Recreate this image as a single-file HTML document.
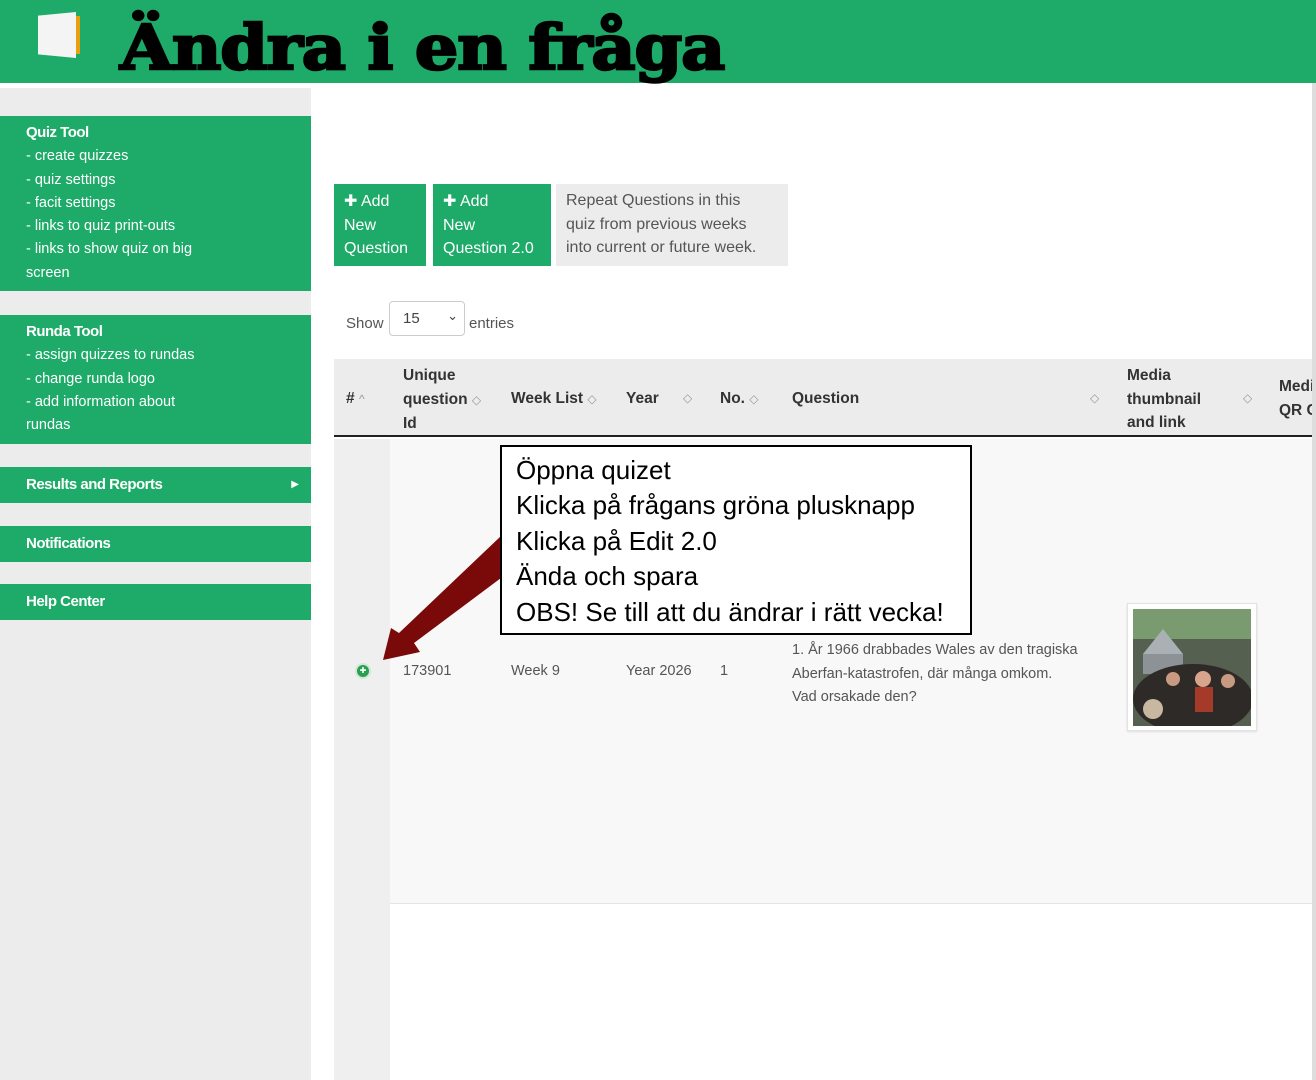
<!DOCTYPE html>
<html><head><meta charset="utf-8"><style>
*{margin:0;padding:0;box-sizing:border-box}
body{width:1316px;height:1080px;position:relative;overflow:hidden;background:#fff;font-family:"Liberation Sans",sans-serif;color:#444}
.a{position:absolute}
.hdr{left:0;top:0;width:1316px;height:83px;background:#1eab69}
.title{left:120px;top:11px;font-family:"DejaVu Serif","Liberation Serif",serif;font-weight:900;font-size:62px;color:#000;letter-spacing:-1px;transform:scaleX(1.1);transform-origin:left;-webkit-text-stroke:2.5px #000}
.side{left:0;top:88px;width:311px;height:992px;background:#ececec}
.blk{position:absolute;left:0;width:311px;background:#1eab69;color:#fff;font-size:14.5px;padding-left:26px;line-height:23.3px}
.blk b{font-size:15px;letter-spacing:-.5px}
.btn{background:#1eab69;color:#fff;font-size:16px;line-height:23.5px;padding:6px 10px}
.gt{color:#555;font-size:16px;line-height:23.5px}
.th{font-weight:bold;font-size:15.5px;color:#333;line-height:23.5px}
.td{font-size:14.5px;color:#555}
.s{color:#999;font-size:12px;font-weight:normal}
.note{left:500px;top:445px;width:472px;height:190px;border:2px solid #000;background:#fff;font-size:26px;color:#000;line-height:35.4px;padding:6px 14px;white-space:nowrap}
</style></head><body>
<div class="a hdr"></div>
<div class="a" style="left:38px;top:12px;width:38px;height:46px;background:#f4f4f4;clip-path:polygon(0 8%,100% 0,100% 100%,0 92%)"></div>
<div class="a" style="left:76px;top:16px;width:4px;height:38px;background:#e8a010"></div>
<div class="a title">Ändra i en fråga</div>
<div class="a side"></div>
<div class="blk" style="top:116px;height:175px;padding-top:5px"><b>Quiz Tool</b><br>- create quizzes<br>- quiz settings<br>- facit settings<br>- links to quiz print-outs<br>- links to show quiz on big<br>screen</div>
<div class="blk" style="top:315px;height:129px;padding-top:5px"><b>Runda Tool</b><br>- assign quizzes to rundas<br>- change runda logo<br>- add information about<br>rundas</div>
<div class="blk" style="top:467px;height:36px;line-height:36px"><b>Results and Reports</b><span style="position:absolute;right:12px;font-size:10px">▶</span></div>
<div class="blk" style="top:526px;height:36px;line-height:36px"><b>Notifications</b></div>
<div class="blk" style="top:584px;height:36px;line-height:36px"><b>Help Center</b></div>

<div class="a btn" style="left:334px;top:184px;width:92px;height:82px">✚ Add<br>New<br>Question</div>
<div class="a btn" style="left:433px;top:184px;width:118px;height:82px">✚ Add<br>New<br>Question 2.0</div>
<div class="a gt" style="left:556px;top:184px;width:232px;height:82px;background:#ececec;padding:5px 10px">Repeat Questions in this<br>quiz from previous weeks<br>into current or future week.</div>

<div class="a gt" style="left:346px;top:312px;font-size:15px">Show</div>
<div class="a" style="left:389px;top:301px;width:76px;height:35px;border:1px solid #ccc;border-radius:4px;background:#fff;font-size:15px;padding:8px 13px;color:#444">15<span style="position:absolute;right:6px;top:6px;font-size:13px">⌄</span></div>
<div class="a gt" style="left:469px;top:312px;font-size:15px">entries</div>

<div class="a" style="left:334px;top:359px;width:982px;height:78px;background:#ececec;border-bottom:2px solid #222"></div>
<div class="a th" style="left:346px;top:387px"># <span class="s">^</span></div>
<div class="a th" style="left:403px;top:364px">Unique<br>question <span class="s">◇</span><br>Id</div>
<div class="a th" style="left:511px;top:387px">Week List <span class="s">◇</span></div>
<div class="a th" style="left:626px;top:387px">Year</div><div class="a th s" style="left:683px;top:387px">◇</div>
<div class="a th" style="left:720px;top:387px">No. <span class="s">◇</span></div>
<div class="a th" style="left:792px;top:387px">Question</div><div class="a th s" style="left:1090px;top:387px">◇</div>
<div class="a th" style="left:1127px;top:364px">Media<br>thumbnail<br>and link</div><div class="a th s" style="left:1243px;top:387px">◇</div>
<div class="a th" style="left:1279px;top:375px;white-space:nowrap">Medi<br>QR C</div>

<div class="a" style="left:334px;top:439px;width:982px;height:465px;background:#f8f8f8;border-bottom:1px solid #e4e4e4"></div>
<div class="a" style="left:334px;top:439px;width:56px;height:641px;background:#efefef"></div>
<div class="a" style="left:357px;top:665px;width:12px;height:12px;border-radius:50%;background:#2a9f50;box-shadow:0 0 0 2px #cfe9d6;color:#fff;font-size:8px;line-height:12px;text-align:center">✚</div>
<div class="a td" style="left:403px;top:663px">173901</div>
<div class="a td" style="left:511px;top:663px">Week 9</div>
<div class="a td" style="left:626px;top:663px">Year 2026</div>
<div class="a td" style="left:720px;top:663px">1</div>
<div class="a td" style="left:792px;top:639px;line-height:23.5px;white-space:nowrap">1. År 1966 drabbades Wales av den tragiska<br>Aberfan-katastrofen, där många omkom.<br>Vad orsakade den?</div>
<div class="a" style="left:1127px;top:603px;width:130px;height:128px;background:#fff;border:1px solid #e2e2e2;box-shadow:0 1px 2px #ddd"></div>
<svg class="a" style="left:1133px;top:609px" width="118" height="117"><rect width="118" height="117" fill="#556050"/><rect width="118" height="30" fill="#7a9a70"/><polygon points="10,45 30,20 50,45" fill="#aab0b4"/><rect x="10" y="45" width="40" height="20" fill="#8d9296"/><ellipse cx="60" cy="90" rx="60" ry="35" fill="#2e2a28"/><circle cx="70" cy="70" r="8" fill="#d9a48c"/><rect x="62" y="78" width="18" height="25" fill="#a53a2a"/><circle cx="40" cy="70" r="7" fill="#c99a82"/><circle cx="95" cy="72" r="7" fill="#c99a82"/><circle cx="20" cy="100" r="10" fill="#c8b8a0"/></svg>

<svg class="a" style="left:0;top:0" width="1316" height="1080"><polygon points="501,536 501,578 414,643 420,652 383,660 391,628 399,633" fill="#7a0a0a"/></svg>
<div class="a note">Öppna quizet<br>Klicka på frågans gröna plusknapp<br>Klicka på Edit 2.0<br>Ända och spara<br>OBS! Se till att du ändrar i rätt vecka!</div>
<div class="a" style="left:1312px;top:83px;width:4px;height:997px;background:#ddd"></div>
</body></html>
